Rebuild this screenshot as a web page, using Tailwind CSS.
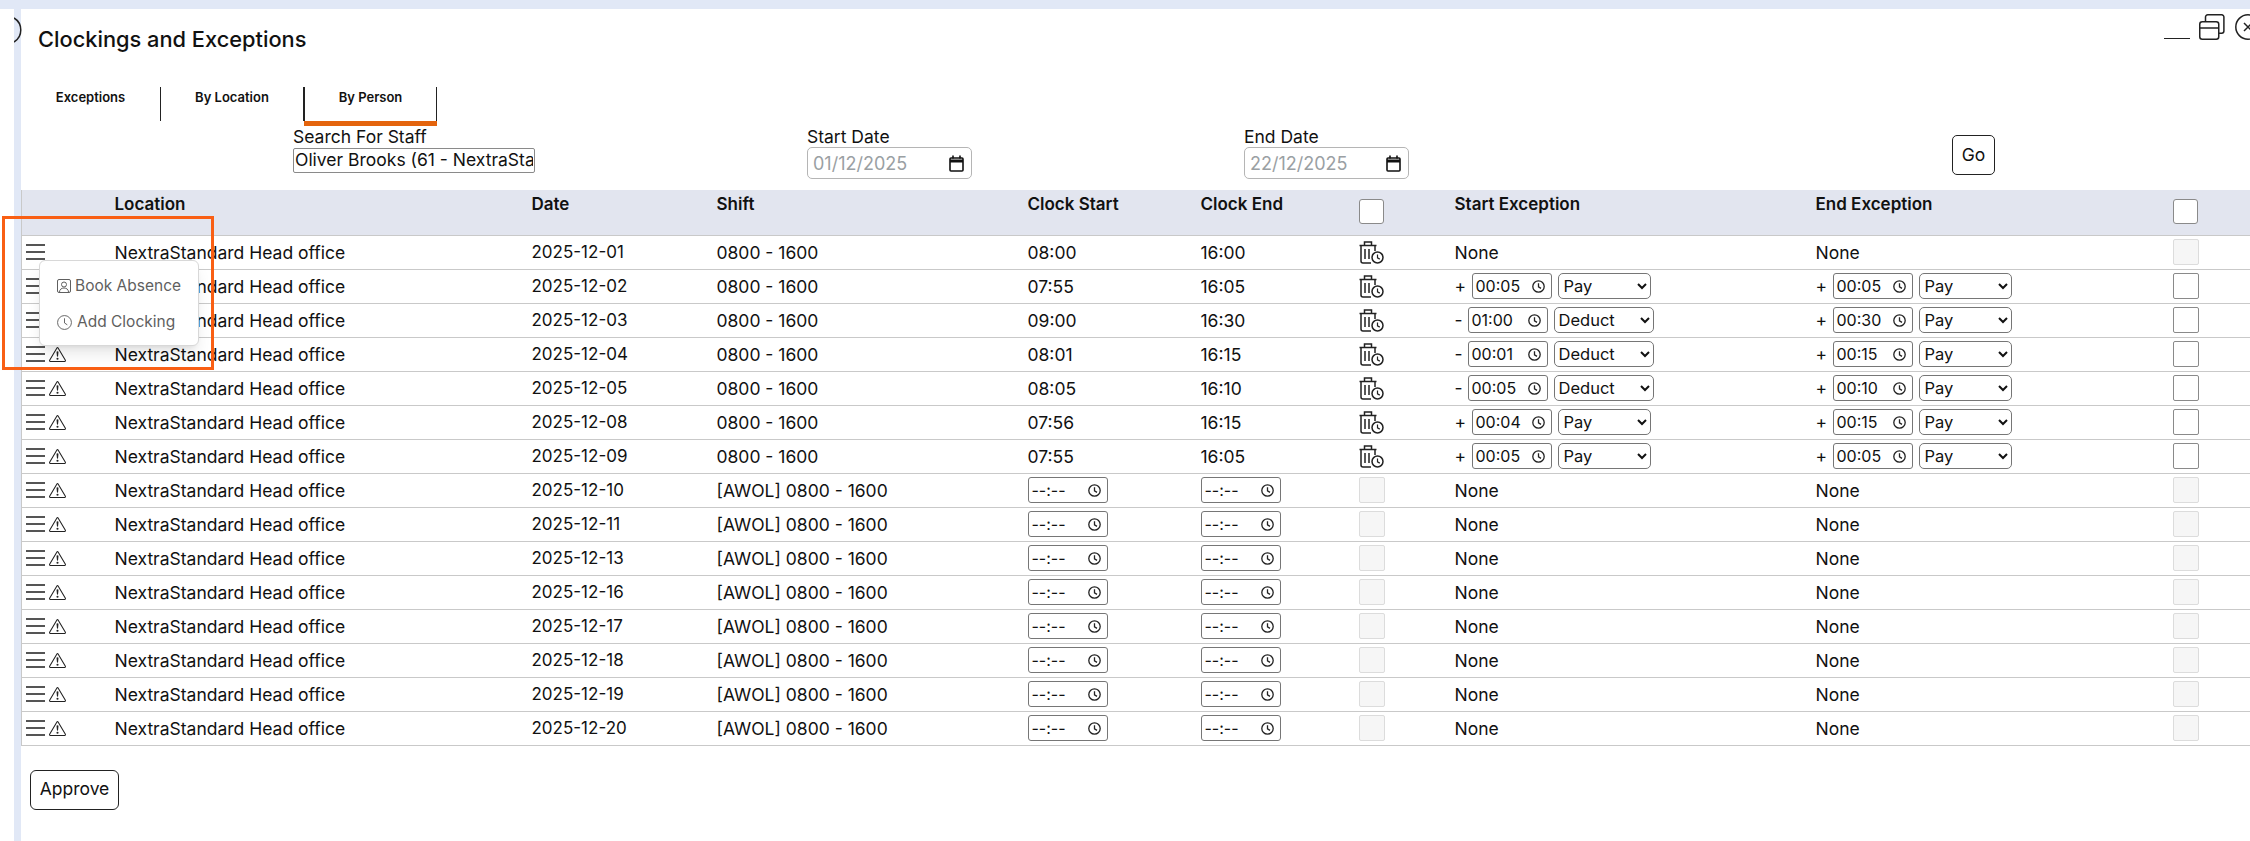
<!DOCTYPE html>
<html lang="en">

<head>
    <meta charset="UTF-8">
    <title>Clockings and Exceptions</title>
    <script src="https://cdn.jsdelivr.net/npm/@tailwindcss/browser@4"></script>
</head>

<body class="relative flex flex-col h-screen overflow-hidden bg-white text-[#111] font-['Inter',sans-serif] text-base">
    <div class="h-[9px] shrink-0 bg-[#e1e8f6]"></div>
    <!-- edge of the window behind -->
    <svg class="absolute left-[14px] top-[17px]" width="8" height="26" viewBox="0 0 8 26" fill="none" stroke="#222" stroke-width="1.5"><path d="M0 1A14 14 0 0 1 0 25"/></svg>

    <div class="flex flex-1 min-h-0">
        <div class="w-[14px] shrink-0"></div>
        <div class="w-[7px] shrink-0 bg-[#e1e8f6]"></div>

        <main class="flex-1 min-w-0 flex flex-col">
            <div class="flex h-[78px] shrink-0">
                <h1 class="ml-[17px] mt-[16px] text-[21.8px] leading-[28px] font-medium">Clockings and Exceptions</h1>
                <div class="ml-auto mr-[-11px] mt-[5px] flex items-start">
                    <div class="w-[26px] h-[26px] flex items-end"><div class="w-full h-[1.5px] mb-[1px] bg-[#222]"></div></div>
                    <svg class="ml-[9px]" width="26" height="26" viewBox="0 0 26 26" fill="none" stroke="#222" stroke-width="1.5"><rect x="0.75" y="7.75" width="19" height="17.5" rx="2.5"/><path d="M1 14h19M6.5 7.5V3a2.2 2.2 0 0 1 2.2-2.2h14a2.2 2.2 0 0 1 2.2 2.2v14a2.2 2.2 0 0 1-2.2 2.2H20"/></svg>
                    <svg class="ml-[10px]" width="26" height="26" viewBox="0 0 26 26" fill="none" stroke="#222" stroke-width="1.5"><circle cx="13" cy="13" r="12.2"/><path d="M9 9l8 8M17 9l-8 8"/></svg>
                </div>
            </div>

            <!-- tabs -->
            <div class="flex h-[39px] shrink-0 text-[13px] font-semibold">
                <div class="w-[140px] h-[34px] border-r border-[#222] pt-[2px] text-center leading-[16px]">Exceptions</div>
                <div class="w-[143px] h-[34px] border-r border-[#222] pt-[2px] text-center leading-[16px]">By Location</div>
                <div class="w-[133px] h-[39px] relative">
                    <div class="h-[34px] border-r border-l border-[#222] pt-[2px] text-center leading-[16px]">By Person</div>
                    <div class="h-[5px] bg-[#e4640d]"></div>
                </div>
            </div>

            <!-- filters -->
            <div class="flex h-[64px] shrink-0 pl-[272px] text-[17.5px]">
                <div class="w-[514px]">
                    <div class="leading-[21px]">Search For Staff</div>
                    <input type="text" value="Oliver Brooks (61 - NextraStandard Head office)" class="w-[242px] h-[25px] px-[1px] border border-[#8a8a8a] rounded-[2px] outline-none">
                </div>
                <div class="w-[437px]">
                    <div class="leading-[21px]">Start Date</div>
                    <div class="w-[165px] h-[32px] flex items-center justify-between pl-[5px] pr-[7px] border border-[#b5b5b5] rounded-[5px] text-[18px] text-[#9aa0a3]">
                        <span>01/12/2025</span>
                        <svg width="15" height="17" viewBox="0 0 15 17" fill="none" stroke="#111" stroke-width="1.6"><rect x="1" y="3" width="13" height="13" rx="1"/><path d="M1 6h13" stroke-width="3"/><path d="M4 0.5v3M11 0.5v3"/></svg>
                    </div>
                </div>
                <div class="w-[708px]">
                    <div class="leading-[21px]">End Date</div>
                    <div class="w-[165px] h-[32px] flex items-center justify-between pl-[5px] pr-[7px] border border-[#b5b5b5] rounded-[5px] text-[18px] text-[#9aa0a3]">
                        <span>22/12/2025</span>
                        <svg width="15" height="17" viewBox="0 0 15 17" fill="none" stroke="#111" stroke-width="1.6"><rect x="1" y="3" width="13" height="13" rx="1"/><path d="M1 6h13" stroke-width="3"/><path d="M4 0.5v3M11 0.5v3"/></svg>
                    </div>
                </div>
                <button class="w-[43px] h-[40px] mt-[9px] border border-[#222] rounded-[5px]">Go</button>
            </div>

            <table class="w-full table-fixed shrink-0 border-l border-[#c9c9c9] text-[17.5px]">
                <colgroup>
                    <col class="w-[93px]"><col class="w-[417px]"><col class="w-[185px]"><col class="w-[311px]"><col class="w-[173px]">
                    <col class="w-[158px]"><col class="w-[96px]"><col class="w-[361px]"><col class="w-[357px]"><col class="w-[78px]">
                </colgroup>
                <thead class="bg-[#e2e5ef] border-b border-[#c9c9c9] text-[17px]">
                    <tr class="h-[45px] align-top text-left">
                        <th></th>
                        <th class="pt-[2px] font-semibold">Location</th>
                        <th class="pt-[2px] font-semibold">Date</th>
                        <th class="pt-[2px] font-semibold">Shift</th>
                        <th class="pt-[2px] font-semibold">Clock Start</th>
                        <th class="pt-[2px] font-semibold">Clock End</th>
                        <th class="pt-[9px]"><input type="checkbox" class="block appearance-none w-[25px] h-[25px] bg-white border border-[#8a8a8a] rounded-[3px]"></th>
                        <th class="pt-[2px] font-semibold">Start Exception</th>
                        <th class="pt-[2px] font-semibold">End Exception</th>
                        <th class="pt-[9px]"><input type="checkbox" class="block appearance-none w-[25px] h-[25px] bg-white border border-[#8a8a8a] rounded-[3px]"></th>
                    </tr>
                </thead>
                <tbody id="rows"></tbody>
            </table>

            <div class="pl-[9px] pt-[24px]">
                <button class="w-[89px] h-[40px] border border-[#222] rounded-[6px] text-[17.5px]">Approve</button>
            </div>
        </main>
    </div>

    <!-- row action menu -->
    <div class="absolute left-[39px] top-[260px] w-[160px] h-[86px] flex flex-col justify-center gap-[16px] pt-[2px] pl-[17px] bg-white border border-[#d8d8d8] rounded-[6px] shadow-lg text-[15.5px] text-[#5f5f5f]">
        <div class="flex items-center gap-[4px] h-[20px]">
            <svg width="14" height="14" viewBox="0 0 14 14" fill="none" stroke="#5f5f5f" stroke-width="1"><rect x="0.5" y="0.5" width="13" height="13" rx="1.5"/><circle cx="7" cy="5.5" r="2.5"/><path d="M2.5 13c0-2.5 2-4 4.5-4s4.500 1.500 4.500 4"/></svg>
            <span>Book Absence</span>
        </div>
        <div class="flex items-center gap-[5px] h-[20px]">
            <svg width="15" height="15" viewBox="0 0 16 16" fill="none" stroke="#5f5f5f" stroke-width="1"><circle cx="8" cy="8" r="7.4"/><path d="M8 3.5V8.500L11 10.500"/></svg>
            <span>Add Clocking</span>
        </div>
    </div>

    <!-- highlight drawn over the screenshot -->
    <div class="absolute left-[2px] top-[216px] w-[212px] h-[154px] border-[3px] border-[#f95f14] pointer-events-none"></div>

    <script>
        const clockIcon = `<svg class="shrink-0" width="13" height="13" viewBox="0 0 13 13" fill="none" stroke="#222" stroke-width="1.3"><circle cx="6.5" cy="6.5" r="5.7"/><path d="M6.5 3.2V6.8L9 8.4"/></svg>`;
        const menuIcon = `<svg width="19" height="16" viewBox="0 0 19 16" fill="#555"><rect y="0" width="19" height="2"/><rect y="7" width="19" height="2"/><rect y="14" width="19" height="2"/></svg>`;
        const warnIcon = `<svg width="19" height="17" viewBox="0 0 16 16" fill="#222"><path d="M7.938 2.016A.13.13 0 0 1 8.002 2a.13.13 0 0 1 .063.016.146.146 0 0 1 .054.057l6.857 11.667c.036.06.035.124.002.183a.163.163 0 0 1-.054.06.116.116 0 0 1-.066.017H1.146a.115.115 0 0 1-.066-.017.163.163 0 0 1-.054-.06.176.176 0 0 1 .002-.183L7.884 2.073a.147.147 0 0 1 .054-.057zm1.044-.45a1.13 1.13 0 0 0-1.96 0L.165 13.233c-.457.778.091 1.767.98 1.767h13.713c.889 0 1.438-.99.98-1.767L8.982 1.566z"/><path d="M7.002 12a1 1 0 1 1 2 0 1 1 0 0 1-2 0zM7.1 5.995a.905.905 0 1 1 1.8 0l-.35 3.507a.552.552 0 0 1-1.1 0L7.1 5.995z"/></svg>`;
        const trashIcon = `<svg width="25" height="23" viewBox="0 0 25 23" fill="none" stroke="#222" stroke-width="1.5"><path d="M0.500 4.500h17M5.500 4V1h7v3M2 4.500V20a2 2 0 0 0 2 2h8M16 4.500V10M6 8v10M10 8v10"/><circle cx="18.500" cy="16.500" r="5.500" fill="#fff"/><path d="M18.500 13.500v3.400l2.300 1.200" stroke-width="1.200"/></svg>`;

        const checkOn = `<input type="checkbox" class="block appearance-none w-[26px] h-[26px] bg-white border border-[#8a8a8a] rounded-[2px]">`;
        const checkOff = `<input type="checkbox" disabled class="block appearance-none w-[26px] h-[26px] bg-[#f6f6f6] border border-[#dcdcdc] rounded-[2px]">`;

        function timeBox(value) {
            return `<div class="w-[80px] h-[26px] shrink-0 flex items-center justify-between pl-[3px] pr-[6px] border border-[#767676] rounded-[3px] text-base"><span>${value}</span>${clockIcon}</div>`;
        }

        function exception(e) {
            if (!e) return '<div class="pt-[2px]">None</div>';
            const deduct = e[0] === '-';
            const select = deduct
                ? `<select class="w-[100px] h-[26px] border border-[#767676] rounded-[5px] bg-white text-[16.5px]"><option>Deduct</option></select>`
                : `<select class="w-[93px] h-[26px] pl-[1px] border border-[#767676] rounded-[5px] bg-white text-[16.5px]"><option>Pay</option></select>`;
            return `<div class="flex items-center">
                <span class="${deduct ? 'w-[13px]' : 'w-[17px]'}">${e[0]}</span>${timeBox(e.slice(1))}<span class="w-[6px]"></span>${select}
            </div>`;
        }

        // date, clock start, clock end, start exception, end exception
        const clocked = [
            ['2025-12-01', '08:00', '16:00', null, null],
            ['2025-12-02', '07:55', '16:05', '+00:05', '+00:05'],
            ['2025-12-03', '09:00', '16:30', '-01:00', '+00:30'],
            ['2025-12-04', '08:01', '16:15', '-00:01', '+00:15'],
            ['2025-12-05', '08:05', '16:10', '-00:05', '+00:10'],
            ['2025-12-08', '07:56', '16:15', '+00:04', '+00:15'],
            ['2025-12-09', '07:55', '16:05', '+00:05', '+00:05'],
        ];
        const awol = ['10', '11', '13', '16', '17', '18', '19', '20'];

        function row(date, shift, start, end, trash, startEx, endEx, lastCheck, warn) {
            return `<tr class="h-[34px] border-b border-[#c9c9c9]">
                <td class="pl-[4px]"><div class="flex items-center gap-[3px]">${menuIcon}${warn ? warnIcon : ''}</div></td>
                <td class="pt-[2px]">NextraStandard Head office</td>
                <td class="pt-[2px] text-[17px]">${date}</td>
                <td class="pt-[2px]">${shift}</td>
                <td>${start}</td>
                <td>${end}</td>
                <td>${trash}</td>
                <td>${exception(startEx)}</td>
                <td>${exception(endEx)}</td>
                <td>${lastCheck}</td>
            </tr>`;
        }

        const plain = t => `<div class="pt-[2px]">${t}</div>`;

        let html = '';
        clocked.forEach((r, i) => {
            html += row(r[0], '0800 - 1600', plain(r[1]), plain(r[2]), trashIcon, r[3], r[4], r[3] ? checkOn : checkOff, i > 2);
        });
        awol.forEach(d => {
            html += row('2025-12-' + d, '[AWOL] 0800 - 1600', timeBox('--:--'), timeBox('--:--'), checkOff, null, null, checkOff, true);
        });
        document.getElementById('rows').innerHTML = html;
    </script>
</body>

</html>
